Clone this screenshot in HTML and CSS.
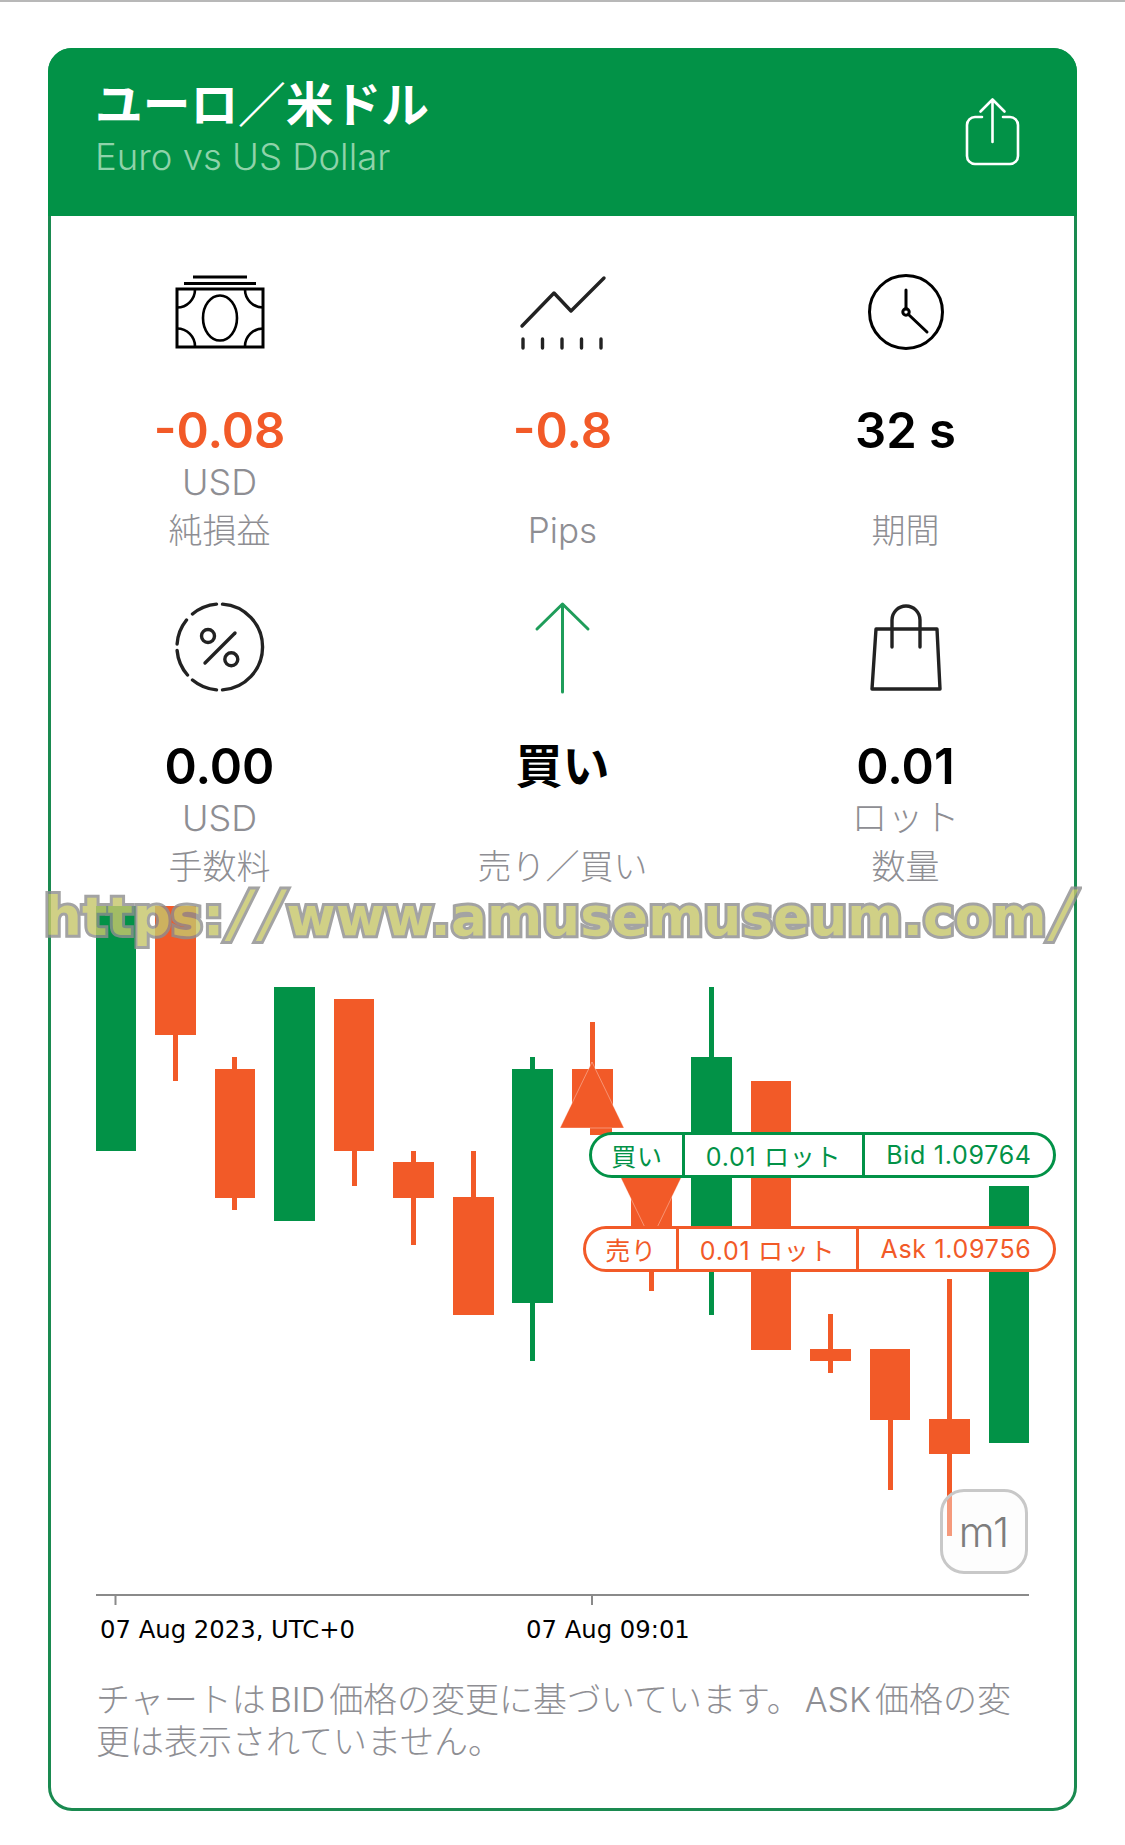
FILE: index.html
```html
<!DOCTYPE html>
<html lang="ja">
<head>
<meta charset="utf-8">
<title>ユーロ／米ドル</title>
<link rel="stylesheet" href="styles.css">
</head>
<body>
<main class="card">
  <header class="head">
    <div class="head-text">
      <h1 class="title">ユーロ／米ドル</h1>
      <p class="subtitle">Euro vs US Dollar</p>
    </div>
    <svg class="share" viewBox="960 94 64 76" fill="none" stroke="#fff" stroke-width="2.6" stroke-linecap="round" stroke-linejoin="round">
      <path d="M981 117h-7a8 8 0 0 0-8 8v31a8 8 0 0 0 8 8h35a8 8 0 0 0 8-8v-31a8 8 0 0 0-8-8h-7"/>
      <path d="M991.5 142V100M979.5 111.500l12-12 12 12"/>
    </svg>
  </header>

  <section class="stats">
    <div class="stat">
      <svg class="icon" viewBox="170 264 100 96" fill="none" stroke="#000" stroke-width="3">
        <path d="M193 277h54M184 283.500h72"/>
        <rect x="177" y="289" width="86" height="58"/>
        <ellipse cx="220" cy="318" rx="17" ry="22.500" stroke-width="2.600"/>
        <path stroke-width="2.600" d="M177 307.500a18 18 0 0 0 18-18.500M263 307.500a18 18 0 0 1-18-18.500M177 328.500a18 18 0 0 1 18 18.500M263 328.500a18 18 0 0 0-18 18.500"/>
      </svg>
      <div class="value loss">-0.08</div>
      <div class="unit">USD</div>
      <div class="label">純損益</div>
    </div>
    <div class="stat">
      <svg class="icon" viewBox="513 264 100 96" fill="none" stroke="#222" stroke-width="3.400" stroke-linecap="round" stroke-linejoin="round">
        <path d="M522 326l32-33 17 18 33-33"/>
        <path d="M523 339v9M542.500 339v9M562 339v9M581.500 339v9M601 339v9"/>
      </svg>
      <div class="value loss">-0.8</div>
      <div class="unit"></div>
      <div class="label latin">Pips</div>
    </div>
    <div class="stat">
      <svg class="icon" viewBox="856 264 100 96" fill="none" stroke="#000" stroke-width="3" stroke-linecap="round">
        <circle cx="906" cy="312" r="36.500"/>
        <circle cx="906" cy="312" r="3.200"/>
        <path d="M906 309V290M908.500 314.500L927 332"/>
      </svg>
      <div class="value">32 s</div>
      <div class="unit"></div>
      <div class="label">期間</div>
    </div>
    <div class="stat">
      <svg class="icon" viewBox="170 600 100 96" fill="none" stroke="#222" stroke-width="3.400" stroke-linecap="round">
        <path d="M222.500 604.100A43 43 0 0 1 222.500 689.900M216.500 604.100A43 43 0 0 0 192.500 614M186.500 620A43 43 0 0 0 177.100 644M177.100 650.500A43 43 0 0 0 187.500 675M192.500 680A43 43 0 0 0 216.500 689.900"/>
        <circle cx="208" cy="636" r="6.500"/>
        <circle cx="231.300" cy="659.300" r="6.500"/>
        <path d="M235 633L205 663"/>
      </svg>
      <div class="value">0.00</div>
      <div class="unit">USD</div>
      <div class="label">手数料</div>
    </div>
    <div class="stat">
      <svg class="icon" viewBox="513 600 100 96" fill="none" stroke="#1f9d5a" stroke-width="3" stroke-linecap="round" stroke-linejoin="round">
        <path d="M562.500 692V604M537 629l25.500-25 25.500 25"/>
      </svg>
      <div class="value jp">買い</div>
      <div class="unit"></div>
      <div class="label">売り／買い</div>
    </div>
    <div class="stat">
      <svg class="icon" viewBox="856 600 100 96" fill="none" stroke="#222" stroke-width="3.400" stroke-linecap="round" stroke-linejoin="round">
        <path d="M876 629h61l3 60h-68z"/>
        <path d="M892 647v-27a14 14 0 0 1 28 0v27"/>
      </svg>
      <div class="value">0.01</div>
      <div class="unit">ロット</div>
      <div class="label">数量</div>
    </div>
  </section>

  <section class="chart">
    <svg class="plot" viewBox="51 900 1023 750">
      <g class="up">
        <rect x="96" y="906" width="40" height="245"/>
        <rect x="274" y="987" width="41" height="234"/>
        <rect x="512" y="1069" width="41" height="234"/>
        <rect x="530" y="1057" width="5" height="304"/>
        <rect x="691" y="1057" width="41" height="190"/>
        <rect x="709" y="987" width="5" height="328"/>
        <rect x="989" y="1186" width="40" height="257"/>
      </g>
      <g class="down">
        <rect x="155" y="906" width="41" height="129"/>
        <rect x="173" y="1030" width="5" height="51"/>
        <rect x="215" y="1069" width="40" height="129"/>
        <rect x="232" y="1057" width="5" height="153"/>
        <rect x="334" y="999" width="40" height="152"/>
        <rect x="352" y="1140" width="5" height="46"/>
        <rect x="393" y="1162" width="41" height="36"/>
        <rect x="411" y="1151" width="5" height="94"/>
        <rect x="453" y="1197" width="41" height="118"/>
        <rect x="471" y="1151" width="5" height="50"/>
        <rect x="572" y="1069" width="41" height="59"/>
        <rect x="590" y="1127" width="22" height="8"/>
        <rect x="590" y="1022" width="5" height="50"/>
        <rect x="631" y="1150" width="41" height="90"/>
        <rect x="649" y="1230" width="5" height="61"/>
        <rect x="751" y="1081" width="40" height="269"/>
        <rect x="810" y="1349" width="41" height="12"/>
        <rect x="828" y="1314" width="5" height="59"/>
        <rect x="870" y="1349" width="40" height="71"/>
        <rect x="888" y="1415" width="5" height="75"/>
        <rect x="929" y="1419" width="41" height="35"/>
        <rect x="947" y="1279" width="5" height="257"/>
      </g>
      <g class="markers">
        <path d="M592 1062l32 66h-64z"/>
        <path d="M619 1174h64l-32 66z"/>
      </g>
      <path class="axis" d="M96 1595h933M115.500 1595v10M592 1595v10"/>
      <text class="tick" x="100" y="1638">07 Aug 2023, UTC+0</text>
      <text class="tick" x="526" y="1638">07 Aug 09:01</text>
    </svg>
    <div class="pill bid">
      <span class="seg side">買い</span>
      <span class="seg lots">0.01 ロット</span>
      <span class="seg price">Bid 1.09764</span>
    </div>
    <div class="pill ask">
      <span class="seg side">売り</span>
      <span class="seg lots">0.01 ロット</span>
      <span class="seg price">Ask 1.09756</span>
    </div>
    <div class="period">m1</div>
  </section>

  <p class="note">チャートは<span class="lat">BID</span>価格の変更に基づいています。<span class="lat">ASK</span>価格の変<br>更は表示されていません。</p>
</main>
<div class="watermark">https:<span class="slash">/</span><span class="slash">/</span>www.amusemuseum.com<span class="slash">/</span></div>
</body>
</html>
```
FILE: styles.css
```css
* { box-sizing: border-box; }
html, body { margin: 0; padding: 0; background: #fff; }
body {
  position: relative;
  width: 1125px;
  height: 1845px;
  overflow: hidden;
  border-top: 2px solid #b8b8b8;
  font-family: Inter, "Noto Sans CJK JP", sans-serif;
}
.card {
  width: 1029px;
  height: 1763px;
  margin: 46px 48px 0;
  border: 3px solid #1a8a50;
  border-radius: 24px;
}
.head {
  display: flex;
  justify-content: space-between;
  margin: -3px -3px 0;
  height: 168px;
  padding: 24px 60px 0 47px;
  background: #029247;
  border-radius: 24px 24px 0 0;
}
.title {
  margin: 0;
  font-size: 47.700px;
  line-height: 60px;
  font-weight: 700;
  color: #fff;
  font-family: "Noto Sans CJK JP", sans-serif;
}
.subtitle {
  margin: 4px 0 0;
  font-size: 36.500px;
  line-height: 42px;
  font-weight: 300;
  color: #8fd3aa;
}
.share { width: 64px; height: 76px; margin-top: 22px; margin-right: -8px; }
.stats {
  display: grid;
  grid-template-columns: repeat(3, 1fr);
  grid-template-rows: 336px 300px;
  padding-top: 48px;
  margin: 0 -3px;
}
.stat { display: flex; flex-direction: column; align-items: center; }
.icon { width: 100px; height: 96px; flex: none; }
.value {
  margin-top: 41px;
  font-size: 49px;
  line-height: 60px;
  height: 60px;
  font-weight: 600;
  color: #000;
}
.value.jp { font-family: "Noto Sans CJK JP", sans-serif; font-weight: 700; font-size: 47px; line-height: 52px; }
.loss { color: #f25a28; }
.unit { height: 43px; font-size: 36px; line-height: 42px; font-weight: 300; color: #8e8e93; }
.label { height: 54px; font-size: 34px; line-height: 54px; font-weight: 300; color: #8e8e93; }
.label.latin { font-size: 35px; line-height: 52px; }
.chart { position: relative; height: 750px; }
.plot { display: block; width: 1023px; height: 750px; }
.up rect { fill: #029247; }
.down rect, .markers path { fill: #f25a28; }
.markers path { stroke: rgba(255,255,255,.35); stroke-width: 1; }
.axis { fill: none; stroke: #8a8a8a; stroke-width: 2; }
.tick { font-family: "DejaVu Sans", sans-serif; font-size: 24.300px; fill: #000; }
.pill {
  position: absolute;
  display: flex;
  height: 46px;
  border: 3px solid;
  border-radius: 23px;
  background: #fff;
  font-size: 25px;
  letter-spacing: .7px;
}
.bid { left: 538px; top: 232px; width: 467px; color: #029247; }
.ask { left: 532px; top: 326px; width: 473px; color: #f25a28; }
.seg { display: flex; align-items: center; justify-content: center; border-left: 3px solid; }
.seg.side { width: 90px; border-left: 0; }
.seg.lots { width: 180px; }
.seg.price { flex: 1; }
.period {
  position: absolute;
  left: 889px;
  top: 589px;
  width: 88px;
  height: 85px;
  display: flex;
  align-items: center;
  justify-content: center;
  border: 3px solid #c8c8c8;
  border-radius: 24px;
  background: rgba(250,250,250,.4);
  font-size: 41px;
  font-weight: 300;
  color: #7d7d7d;
}
.note {
  margin: 29px 0 0;
  padding: 0 45px;
  font-size: 34px;
  line-height: 42px;
  font-weight: 300;
  color: #8e8e93;
}
.lat { margin: 0 4px; }
.watermark {
  position: absolute;
  left: 44px;
  top: 877px;
  font-family: "DejaVu Sans", sans-serif;
  font-weight: 700;
  font-size: 53px;
  letter-spacing: .2px;
  line-height: 70px;
  white-space: nowrap;
  color: #c6c66c;
  -webkit-text-stroke: 6px #8f8f8f;
  paint-order: stroke fill;
  opacity: .82;
}
.slash { font-style: italic; font-weight: 400; font-size: 62px; margin: 0 5px; }
```
